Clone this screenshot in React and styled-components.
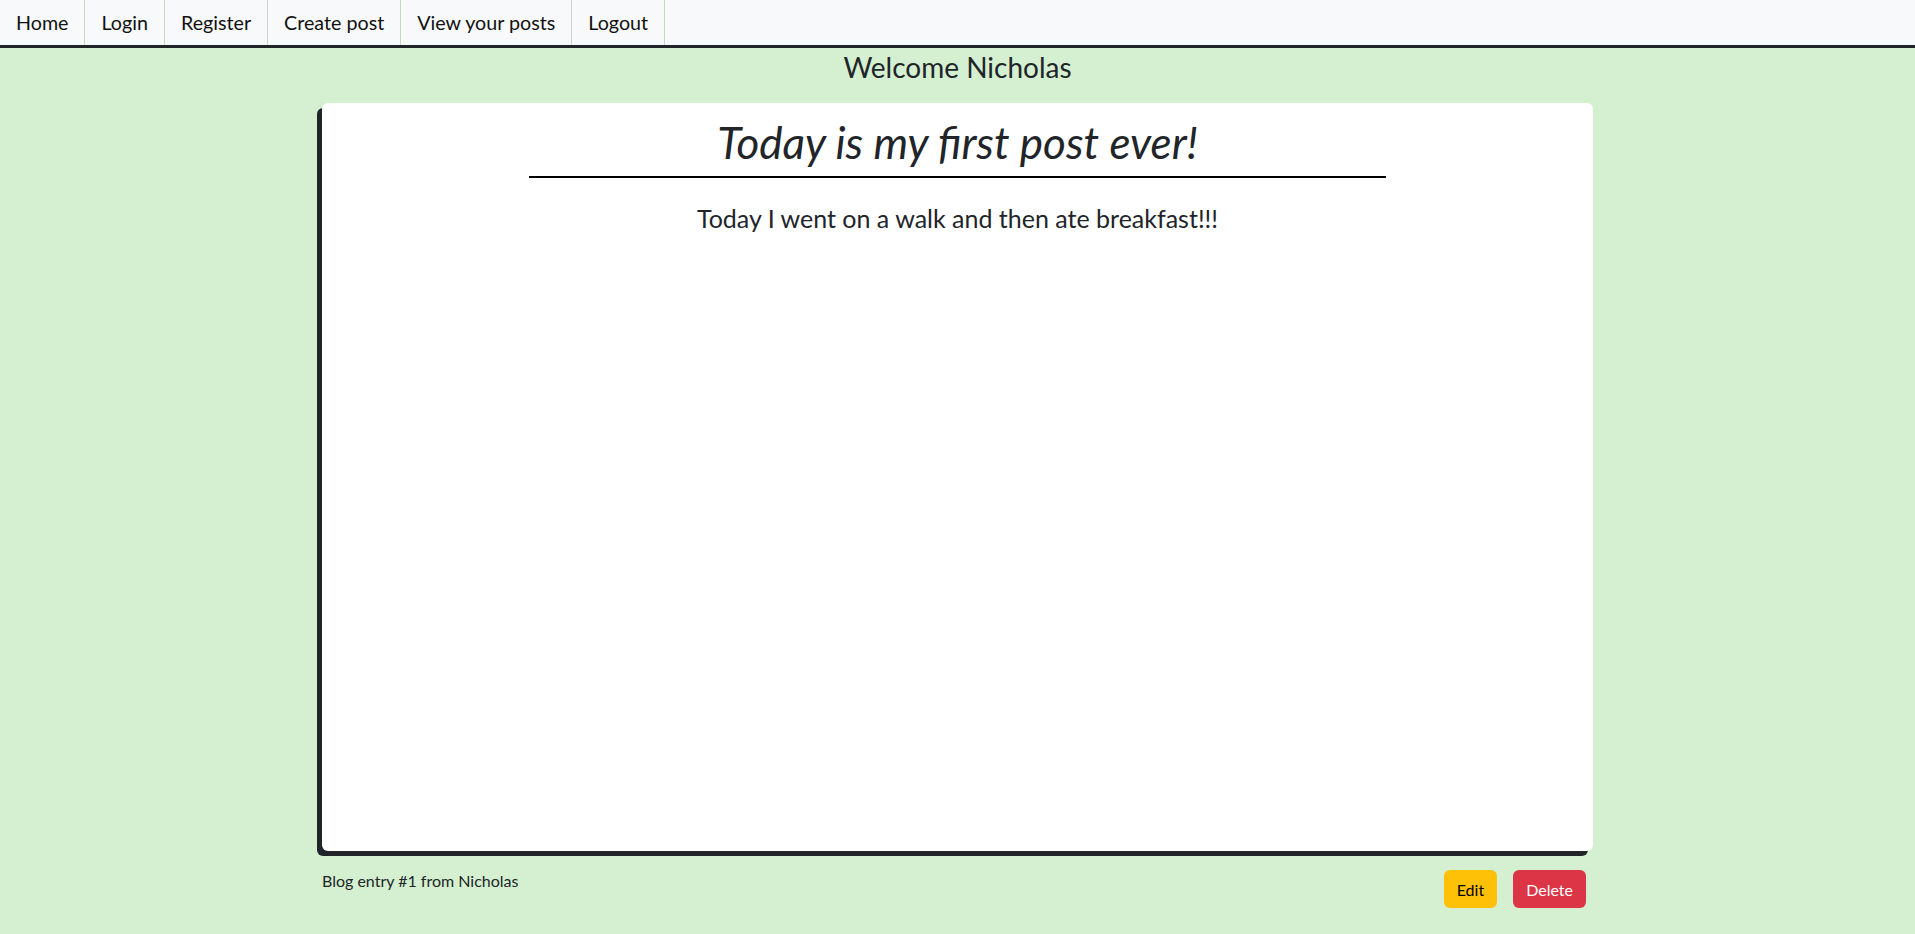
import React from 'react';
import styled, { createGlobalStyle } from 'styled-components';

const GlobalStyle = createGlobalStyle`
  html, body {
    margin: 0;
    padding: 0;
    background-color: #d4f0d1;
    font-family: Lato, "Noto Sans", sans-serif;
    color: #212529;
  }
  #root {
    min-height: 934px;
  }
`;

const Navbar = styled.nav`
  display: flex;
  height: 45px;
  background-color: #f8f9fa;
  border-bottom: 3px solid #212529;
`;

const NavItem = styled.a`
  display: flex;
  align-items: center;
  padding: 0 16px;
  font-size: 19.7px;
  color: #111;
  text-decoration: none;
  border-right: 1px solid #c3dbc0;
  cursor: pointer;
`;

const Main = styled.main`
  width: 1271px;
  margin: 0 auto;
`;

const Welcome = styled.h2`
  margin: 3px 0 20px;
  text-align: center;
  font-size: 28px;
  font-weight: 400;
  line-height: 32px;
`;

const PostCard = styled.article`
  height: 748px;
  padding-top: 10px;
  box-sizing: border-box;
  background-color: #fff;
  border-radius: 6px;
  box-shadow: -5px 5px 0 #212529;
`;

const PostTitle = styled.h1`
  margin: 0;
  text-align: center;
  font-size: 44px;
  font-style: italic;
  font-weight: 400;
  line-height: 58px;
`;

const Divider = styled.hr`
  width: 67.5%;
  margin: 5px auto 0;
  border: none;
  border-top: 2px solid #000;
`;

const PostBody = styled.p`
  margin: 25px 0 0;
  text-align: center;
  font-size: 25px;
  line-height: 30px;
`;

const Footer = styled.div`
  display: flex;
  justify-content: space-between;
  align-items: flex-start;
  margin-top: 19px;
  padding-right: 7px;
`;

const EntryInfo = styled.span`
  margin-top: 1px;
  font-size: 16px;
`;

const Actions = styled.div`
  display: flex;
  gap: 16px;
`;

const ActionButton = styled.button`
  height: 38px;
  padding: 0 13px;
  font-family: inherit;
  font-size: 16px;
  border: none;
  border-radius: 6px;
  cursor: pointer;
  background-color: ${(p) => (p.$danger ? '#dc3545' : '#ffc107')};
  color: ${(p) => (p.$danger ? '#fff' : '#000')};
`;

const navLinks = ['Home', 'Login', 'Register', 'Create post', 'View your posts', 'Logout'];

export default function App() {
  return (
    <>
      <GlobalStyle />
      <Navbar>
        {navLinks.map((link) => (
          <NavItem key={link}>{link}</NavItem>
        ))}
      </Navbar>
      <Main>
        <Welcome>Welcome Nicholas</Welcome>
        <PostCard>
          <PostTitle>Today is my first post ever!</PostTitle>
          <Divider />
          <PostBody>Today I went on a walk and then ate breakfast!!!</PostBody>
        </PostCard>
        <Footer>
          <EntryInfo>Blog entry #1 from Nicholas</EntryInfo>
          <Actions>
            <ActionButton>Edit</ActionButton>
            <ActionButton $danger>Delete</ActionButton>
          </Actions>
        </Footer>
      </Main>
    </>
  );
}
